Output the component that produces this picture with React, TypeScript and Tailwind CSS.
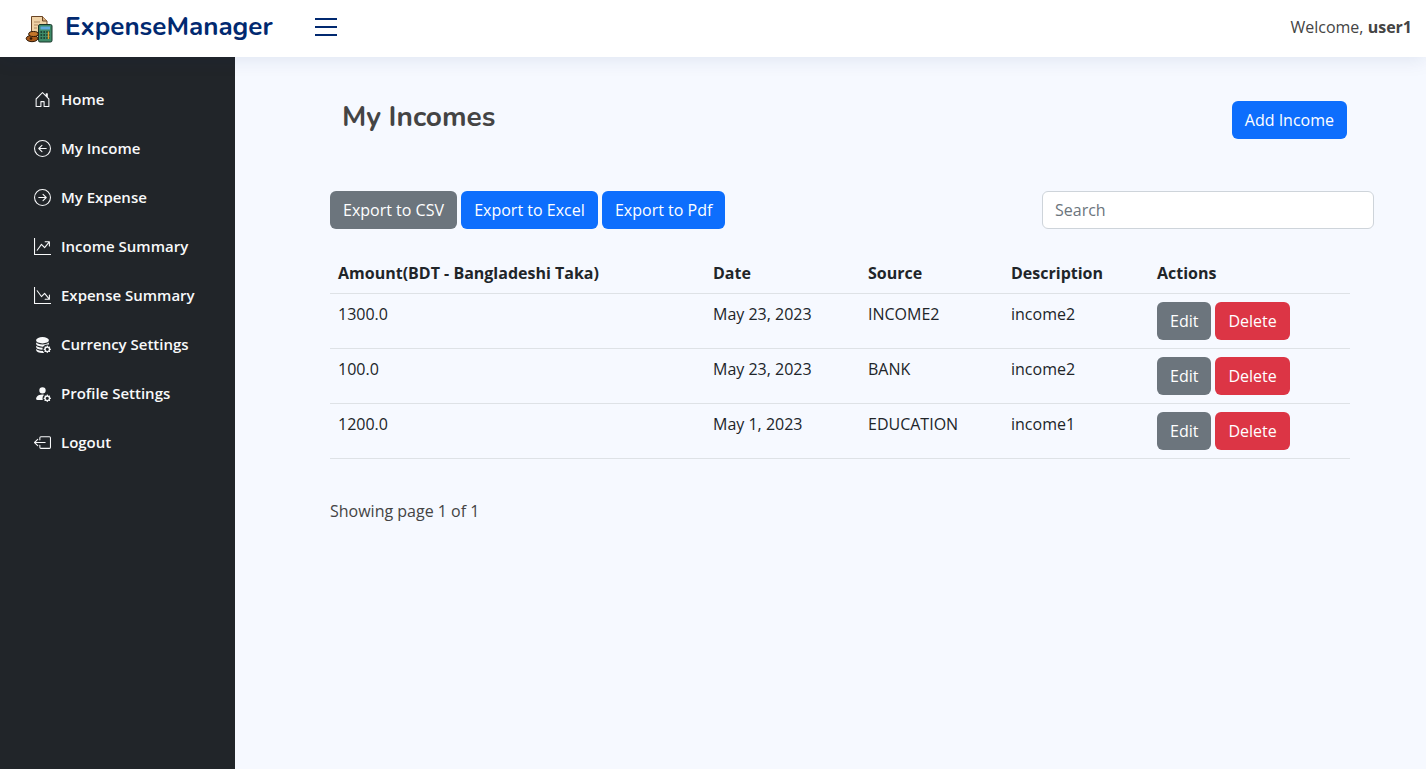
import {
  BsArrowLeftCircle,
  BsArrowRightCircle,
  BsBoxArrowLeft,
  BsDatabaseFillGear,
  BsGraphDownArrow,
  BsGraphUpArrow,
  BsHouseDoor,
  BsPersonFillGear,
} from "react-icons/bs";

const NAV = [
  { label: "Home", icon: BsHouseDoor },
  { label: "My Income", icon: BsArrowLeftCircle },
  { label: "My Expense", icon: BsArrowRightCircle },
  { label: "Income Summary", icon: BsGraphUpArrow },
  { label: "Expense Summary", icon: BsGraphDownArrow },
  { label: "Currency Settings", icon: BsDatabaseFillGear },
  { label: "Profile Settings", icon: BsPersonFillGear },
  { label: "Logout", icon: BsBoxArrowLeft },
];

const ROWS = [
  { amount: "1300.0", date: "May 23, 2023", source: "INCOME2", description: "income2" },
  { amount: "100.0", date: "May 23, 2023", source: "BANK", description: "income2" },
  { amount: "1200.0", date: "May 1, 2023", source: "EDUCATION", description: "income1" },
];

const BTN = "h-[38px] rounded-md px-[13px] text-base text-white";

function Logo() {
  return (
    <svg width="30" height="30" viewBox="0 0 30 30" className="mt-1 shrink-0">
      <path d="M6.5 2.5h11l4.5 4.500v18h-15.500z" fill="#f0d2a6" stroke="#6a4526" strokeWidth="1" />
      <path d="M17.500 2.500v4.500h4.500" fill="#dcb484" stroke="#6a4526" strokeWidth="1" />
      <path d="M9 8h6M9 11h4M9 14h3" stroke="#b08a60" strokeWidth="1" />
      <rect x="13.500" y="10.500" width="13.500" height="17.500" rx="1.500" fill="#3e8a68" stroke="#18352a" strokeWidth="1" />
      <rect x="15.500" y="12.500" width="9.500" height="3" fill="#5fa8dc" />
      <path d="M15.500 18h9.500M15.500 21h9.500M15.500 24h9.500" stroke="#143226" strokeWidth="1.500" strokeDasharray="1.600 1.300" />
      <path d="M23.500 17.500v7.500" stroke="#e0a030" strokeWidth="1.500" />
      <ellipse cx="7" cy="24.500" rx="5.800" ry="3.200" fill="#a85a1a" stroke="#2e1806" strokeWidth="1" />
      <ellipse cx="8.500" cy="20" rx="4.800" ry="2.500" fill="#c4762a" stroke="#2e1806" strokeWidth="1" />
      <circle cx="6" cy="24.500" r="1.300" fill="#2e1806" />
    </svg>
  );
}

export default function App() {
  return (
    <div className="flex h-[769px] flex-col overflow-hidden bg-[#f6f9ff] font-['Open_Sans',sans-serif] text-base text-[#444444]">
      <header className="z-10 flex h-[57px] shrink-0 items-center bg-white pb-1 pr-[14px] shadow-[0_2px_20px_rgba(1,41,112,0.1)]">
        <div className="ml-[25px] flex items-center gap-[10px]">
          <Logo />
          <span className="font-['Nunito','Open_Sans',sans-serif] text-[26px] font-bold leading-none text-[#012970]">
            ExpenseManager
          </span>
        </div>
        <button className="ml-[42px] flex w-[22px] flex-col gap-[6px]">
          <span className="h-[2px] bg-[#012970]" />
          <span className="h-[2px] bg-[#012970]" />
          <span className="h-[2px] bg-[#012970]" />
        </button>
        <div className="ml-auto">
          Welcome, <b className="font-bold">user1</b>
        </div>
      </header>

      <div className="flex min-h-0 flex-1">
        <aside className="w-[235px] shrink-0 bg-[#212529] pt-[18px]">
          {NAV.map((n) => (
            <a key={n.label} className="flex h-[49px] items-center gap-[10px] pl-[34px] text-[15px] font-semibold text-[#f8f9fa]">
              <n.icon className="h-[17px] w-[17px] shrink-0" />
              {n.label}
            </a>
          ))}
        </aside>

        <main className="min-w-0 flex-1 pl-[95px] pr-[52px]">
          <div className="flex items-start justify-between pl-[12px] pr-[27px] pt-[44px]">
            <h1 className="font-['Nunito','Open_Sans',sans-serif] text-[28px] font-bold leading-[32px]">My Incomes</h1>
            <button className={`${BTN} bg-[#0d6efd]`}>Add Income</button>
          </div>

          <div className="mt-[52px] flex items-center justify-between">
            <div className="flex gap-1">
              <button className={`${BTN} bg-[#6c757d]`}>Export to CSV</button>
              <button className={`${BTN} w-[137px] bg-[#0d6efd]`}>Export to Excel</button>
              <button className={`${BTN} w-[123px] whitespace-nowrap bg-[#0d6efd]`}>Export to Pdf</button>
            </div>
            <input
              placeholder="Search"
              className="h-[38px] w-[332px] rounded-md border border-[#ced4da] bg-white px-3 text-base text-[#212529] placeholder:text-[#6c757d]"
            />
          </div>

          <table className="mt-[24px] w-[1020px] table-fixed border-collapse text-left text-[#212529]">
            <thead>
              <tr className="h-[40px] border-b border-[#dee2e6]">
                <th className="w-[375px] px-2 font-bold">Amount(BDT - Bangladeshi Taka)</th>
                <th className="w-[155px] px-2 font-bold">Date</th>
                <th className="w-[143px] px-2 font-bold">Source</th>
                <th className="w-[146px] px-2 font-bold">Description</th>
                <th className="px-2 font-bold">Actions</th>
              </tr>
            </thead>
            <tbody>
              {ROWS.map((r) => (
                <tr key={r.amount} className="h-[55px] border-b border-[#dee2e6] align-top">
                  <td className="px-2 py-2">{r.amount}</td>
                  <td className="px-2 py-2">{r.date}</td>
                  <td className="px-2 py-2">{r.source}</td>
                  <td className="px-2 py-2">{r.description}</td>
                  <td className="px-2 py-2">
                    <div className="flex gap-1">
                      <button className={`${BTN} bg-[#6c757d]`}>Edit</button>
                      <button className={`${BTN} bg-[#dc3545]`}>Delete</button>
                    </div>
                  </td>
                </tr>
              ))}
            </tbody>
          </table>

          <p className="mt-[40px]">Showing page 1 of 1</p>
        </main>
      </div>
    </div>
  );
}
